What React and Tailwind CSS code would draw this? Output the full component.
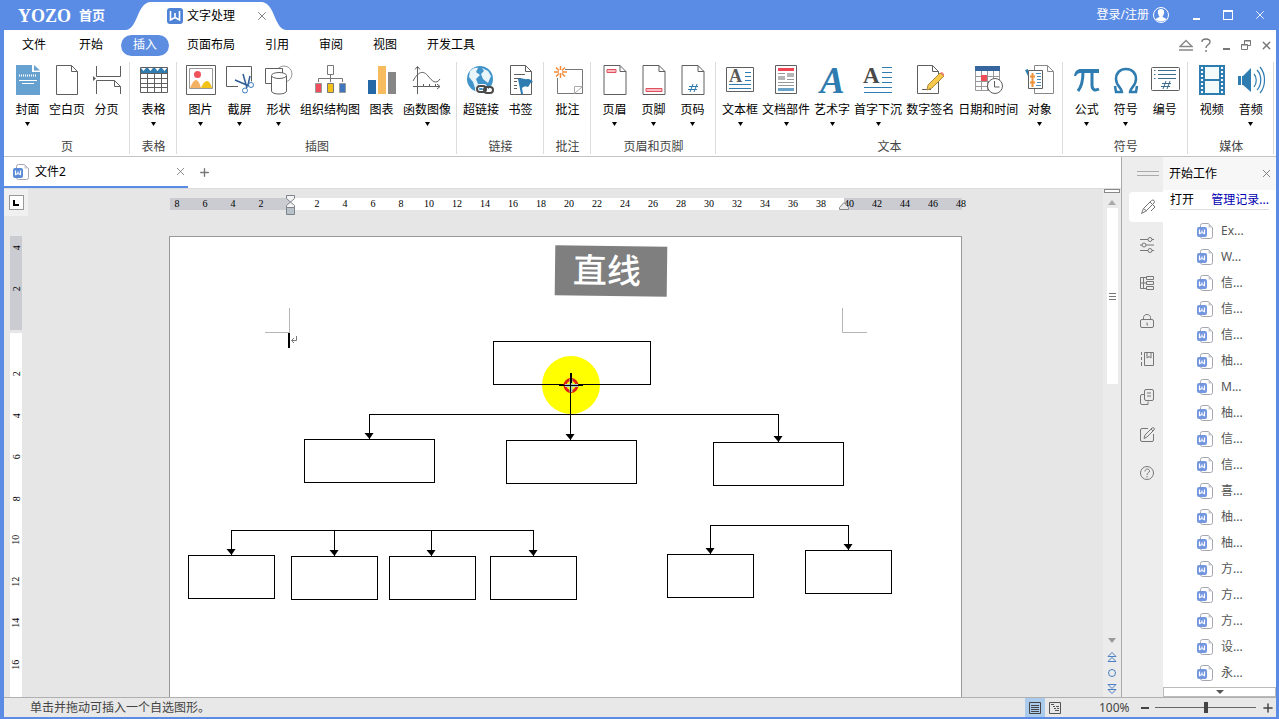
import React from "react";
import { X, Plus } from "lucide-react";

const BLUE = "#2f7cb0";
const DARK = "#5f5f5f";

const Icon = ({ children }) => (
  <svg width="30" height="30" viewBox="0 0 30 30" fill="none" stroke={DARK} className="overflow-visible">
    {children}
  </svg>
);

const Sheet = ({ children }) => (
  <Icon>
    <path d="M4 .5h16l6 6v23H4z" fill="#fff" />
    <path d="M20 .5v6h6" />
    {children}
  </Icon>
);

const icons = {
  cover: (
    <Icon>
      <path d="M3 0h16v7h8v23H3z" fill="#67a1d0" stroke="none" />
      <path d="M21 0v5.500h6z" fill="#67a1d0" stroke="none" />
      <path d="M6 10.500h17" stroke="#fff" strokeDasharray="1 1" strokeWidth="2" />
      <path d="M6 15.500h18M9 18.500h12" stroke="#fff" />
    </Icon>
  ),
  blank: (
    <Icon>
      <path d="M4.500.5h15l6 6v23h-21z" fill="#fff" />
      <path d="M19.500.5v6h6" />
    </Icon>
  ),
  pageBreak: (
    <Icon>
      <path d="M4.500 1v10.500h24V1M4.500 29V15.500h18l6 6V29M22.500 15.500v6h6" />
      <path d="M1 11v5l3-2.500z" fill={DARK} stroke="none" />
    </Icon>
  ),
  table: (
    <Icon>
      <path d="M1 3h28v5H1z" fill="#2f7cb0" stroke="none" />
      <path d="M2 3h5l-2.500 3zM9 3h5l-2.500 3zM16 3h5l-2.500 3zM23 3h5l-2.500 3z" fill="#fff" stroke="none" />
      <path d="M1.500 2.500h27v25h-27zM1.500 8.500h27M1.500 13.500h27M1.500 18.500h27M1.500 22.500h27M8.500 8v19M15.500 8v19M22.500 8v19" />
    </Icon>
  ),
  picture: (
    <Icon>
      <path d="M.5.5h29v29H.5z" fill="#fff" />
      <path d="M3.500 3.500h23v20h-23z" stroke="#999" />
      <circle cx="11.500" cy="9.500" r="3.500" fill="#f0525a" stroke="none" />
      <path d="M4 23c2-5 4-8 6-8s4 4 5 8z" fill="#f4b164" stroke="none" />
      <path d="M15 23c2-5 4-7 6-7s4 3 5 7z" fill="#f2c218" stroke="none" />
    </Icon>
  ),
  screenshot: (
    <Icon>
      <path d="M13 21.500H1.500v-20h25v15" />
      <path d="M18 9l4 14M25 11l-2 9M10 15l14 6" stroke="#2e5c96" strokeWidth="1.500" />
      <circle cx="20" cy="25.500" r="2.500" stroke="#3d7cc0" />
      <circle cx="26" cy="20" r="2.500" stroke="#3d7cc0" />
    </Icon>
  ),
  shapes: (
    <Icon>
      <circle cx="20" cy="9" r="8" stroke="#999" />
      <path d="M1.500 3.500h17v15h-17z" fill="#fff" />
      <path d="M7.500 11v15c0 4 15 4 15 0V11" fill="#fff" />
      <ellipse cx="15" cy="10.500" rx="7.500" ry="3" fill="#fff" />
    </Icon>
  ),
  org: (
    <Icon>
      <path d="M12.500.5h6v9h-6zM15.500 10v3.500M3.500 17v-3.500h24V17M15.500 13.500V17" stroke="#777" />
      <path d="M.5 18.500h6v9h-6z" fill="#f04e5c" stroke="#999" />
      <path d="M12.500 18.500h6v9h-6z" fill="#f2c218" stroke="#777" />
      <path d="M24.500 18.500h6v9h-6z" fill="#3e77bd" stroke="#999" />
    </Icon>
  ),
  chart: (
    <Icon>
      <path d="M1 15h8v14H1z" fill="#2468a8" stroke="none" />
      <path d="M11 1h8v28h-8z" fill="#f7bc5e" stroke="none" />
      <path d="M21 7h8v22h-8z" fill="#868686" stroke="none" />
    </Icon>
  ),
  func: (
    <Icon>
      <path d="M5.500 29V2M3 4.500l2.500-3 2.500 3M1 21.500h27M25 19l3 2.500-3 2.500M11.500 19v2M17.500 19v2M23.500 19v2" />
      <path d="M1 16C7 5 12 6 16 11s8 9 12 3" />
    </Icon>
  ),
  link: (
    <Icon>
      <circle cx="14" cy="14" r="13" fill="#4194c9" stroke="none" />
      <path d="M4 6c3-3 6-4 8-3l-2 4 4 3-4 4 2 5-3 4-2-6-4-5zM16 3l6 3 3 5-3 7-5-4-2-5 3-3zM14 22l6-3-1 6z" fill="#e9f5fb" stroke="none" />
      <rect x="11" y="21" width="9" height="6" rx="3" stroke="#fff" strokeWidth="4" />
      <rect x="11" y="21" width="9" height="6" rx="3" stroke="#4a4a4a" strokeWidth="2" />
      <rect x="18" y="22" width="9" height="6" rx="3" stroke="#4a4a4a" strokeWidth="2" />
    </Icon>
  ),
  bookmark: (
    <Icon>
      <path d="M4.500.5h15l6 6v23h-21z" fill="#fff" />
      <path d="M19.500.5v6h6M8 9.500h11M8 13.500h7M8 16.500h3M8 20.500h3M8 23.500h3" />
      <path d="M12 14c4-2 7 1 9 0 2 0 4 0 6 3-3 0-3 3-5 5-3-1-5 0-6 1l1 6h-2z" fill={BLUE} stroke="none" />
    </Icon>
  ),
  comment: (
    <Icon>
      <path d="M12 4.500h17.500v24h-25V13" stroke="#777" />
      <path d="M21.500 28.500v-7h8z" fill="#fff" stroke="#aaa" />
      <path d="M7.500 1v4M7.500 8v5M1 7h5M9 7h5M3 2.500l3 3M12 2.500l-3 3M3 11.500l3-3M12 11.500l-3-3" stroke="#f58a38" strokeWidth="1.500" />
    </Icon>
  ),
  header: (
    <Sheet>
      <path d="M7 4.500h9v3H7z" fill="#f9bcc0" stroke="#e0505e" />
    </Sheet>
  ),
  footer: (
    <Sheet>
      <path d="M7 23.500h16v3H7z" fill="#f9bcc0" stroke="#e0505e" />
    </Sheet>
  ),
  pageNo: (
    <Sheet>
      <path d="M11 21.500h9M10 24.500h9M15 19l-3 8M19 19l-3 8" stroke={BLUE} />
    </Sheet>
  ),
  textBox: (
    <Icon>
      <path d="M1.500 2.500h27v24h-27z" fill="#fff" />
      <text x="4" y="17" fontSize="18" fontWeight="bold" fill="#5a5a5a" stroke="none" fontFamily="Liberation Serif, serif">A</text>
      <path d="M20 7.500h6M20 11.500h6M20 15.500h6M4 19.500h22M4 23.500h22" stroke={BLUE} />
    </Icon>
  ),
  parts: (
    <Icon>
      <path d="M4.500.5h21v28h-21z" fill="#fff" />
      <path d="M7 3h16v3H7z" fill="#ef4452" stroke="none" />
      <path d="M7 11h7v4H7zM16 8h7v4h-7z" fill="#b5b5b5" stroke="none" />
      <path d="M7 8.500h7M16 14.500h7M7 17.500h16M7 20.500h16" stroke="#999" />
      <path d="M7 23h16v3H7z" fill="#6ba3c8" stroke="none" />
    </Icon>
  ),
  wordArt: (
    <Icon>
      <text x="3" y="28" fontSize="37" fontWeight="bold" fontStyle="italic" fill={BLUE} stroke="none" fontFamily="Liberation Serif, serif">A</text>
    </Icon>
  ),
  dropCap: (
    <Icon>
      <text x="0" y="18" fontSize="23" fontWeight="bold" fill="#4a4a4a" stroke="none" fontFamily="Liberation Serif, serif">A</text>
      <path d="M19 2.500h10M19 7.500h10M19 12.500h10M19 17.500h10M1 22.500h28M1 27.500h28" stroke={BLUE} />
    </Icon>
  ),
  sign: (
    <Icon>
      <path d="M2.500.5h15l6 6v22h-21z" fill="#fff" />
      <path d="M17.500.5v6h6M7 24.500h9" />
      <path d="M13 20l12-12 4 3-12 12-5 2z" fill="#f7c94a" stroke="#b08a3c" />
      <path d="M25 8l2-1 2 2v2z" fill="#ef7d6c" stroke="none" />
    </Icon>
  ),
  date: (
    <Icon>
      <path d="M2 1h25v5H2z" fill="#35669e" stroke="none" />
      <path d="M2.500 6v19.500h24V6M2.500 11.500h24M2.500 16.500h24M2.500 21.500h24M8.500 6v19M14.500 6v19M20.500 6v19" stroke="#999" />
      <path d="M8 10h6v6H8z" fill="#ef4e58" stroke="none" />
      <circle cx="22" cy="21" r="7.500" fill="#fff" />
      <path d="M21.500 16v6h5" />
    </Icon>
  ),
  object: (
    <Icon>
      <path d="M9.500.5h13l6 6v22h-19z" fill="#fff" stroke="#888" />
      <path d="M22.500.5v6h6" stroke="#888" />
      <path d="M3.500 5.500h14v18h-14z" fill="#fff" />
      <path d="M0 5l3-1v7z" fill={BLUE} stroke="none" />
      <path d="M7.500 8v14M5 11.500h5M5 17.500h5" stroke="#f0923b" strokeWidth="2" />
      <path d="M11 8.500h5M12 11.500h4M12 14.500h4M12 17.500h4M11 20.500h5" stroke="#4b8ec0" />
    </Icon>
  ),
  pi: (
    <Icon>
      <path d="M2 11c1-5 3-7 7-7h18v4H9c-3 0-4 1-5 3z" fill={BLUE} stroke="none" />
      <path d="M11 7c0 9-1 14-5 19M20 7v13c0 5 3 6 7 4" stroke={BLUE} strokeWidth="3" />
    </Icon>
  ),
  omega: (
    <Icon>
      <path d="M4 21l1 6h6c0-4-6-6-6-13C5 8 9 4 15 4s10 4 10 10c0 7-6 9-6 13h6l1-6" stroke={BLUE} strokeWidth="2.500" />
    </Icon>
  ),
  numbering: (
    <Icon>
      <rect x="1.500" y="2.500" width="28" height="23" rx="1" fill="#fff" />
      <path d="M8 5.500h18M8 9.500h18M8 13.500h18M4 5.500h1.500M4 9.500h1.500M4 13.500h1.500" stroke="#3d6d8c" />
      <path d="M12 18.500h9M11 21.500h9M16 16l-3 8M20 16l-3 8" stroke="#3d6d8c" />
    </Icon>
  ),
  video: (
    <Icon>
      <path d="M2 0h26v30H2z" fill={BLUE} stroke="none" />
      <path d="M8 2h14v12H8zM8 16h14v12H8z" fill="#f3fafc" stroke="none" />
      <path d="M5 2v27M25 2v27" stroke="#fff" strokeWidth="2" strokeDasharray="2 2" />
    </Icon>
  ),
  audio: (
    <Icon>
      <path d="M2 11h3v9H2zM6 11h1l8-8v24l-8-7H6z" fill={BLUE} stroke="none" />
      <path d="M18 9c3 3 3 9 0 13M21 5c5 5 5 15 0 20M24 2c6 7 6 19 0 26" stroke={BLUE} strokeWidth="1.200" />
    </Icon>
  ),
};

const groups = [
  { name: "页", items: [["cover", "封面", true], ["blank", "空白页"], ["pageBreak", "分页"]] },
  { name: "表格", items: [["table", "表格", true]] },
  {
    name: "插图",
    items: [
      ["picture", "图片", true],
      ["screenshot", "截屏", true],
      ["shapes", "形状", true],
      ["org", "组织结构图"],
      ["chart", "图表"],
      ["func", "函数图像", true],
    ],
  },
  { name: "链接", items: [["link", "超链接"], ["bookmark", "书签"]] },
  { name: "批注", items: [["comment", "批注"]] },
  { name: "页眉和页脚", items: [["header", "页眉", true], ["footer", "页脚", true], ["pageNo", "页码", true]] },
  {
    name: "文本",
    items: [
      ["textBox", "文本框", true],
      ["parts", "文档部件", true],
      ["wordArt", "艺术字", true],
      ["dropCap", "首字下沉", true],
      ["sign", "数字签名"],
      ["date", "日期和时间"],
      ["object", "对象", true],
    ],
  },
  { name: "符号", items: [["pi", "公式", true], ["omega", "符号", true], ["numbering", "编号"]] },
  { name: "媒体", items: [["video", "视频"], ["audio", "音频", true]] },
];

const menus = ["开始", "插入", "页面布局", "引用", "审阅", "视图", "开发工具"];
const files = ["Ex...", "W...", "信...", "信...", "信...", "柚...", "M...", "柚...", "信...", "信...", "喜...", "柚...", "柚...", "方...", "方...", "方...", "设...", "永..."];
const hTicks = [8, 6, 4, 2, "", ...Array.from({ length: 24 }, (_, i) => (i + 1) * 2)];
const vTicks = [2, 4, 6, 8, 10, 12, 14, 16];

const boxes = [
  [493.5, 341.5, 157],
  [304.5, 439.5, 130],
  [506.5, 440.5, 130],
  [713.5, 442.5, 130],
  [188.5, 555.5, 86],
  [291.5, 556.5, 86],
  [389.5, 556.5, 86],
  [490.5, 556.5, 86],
  [667.5, 554.5, 86],
  [805.5, 550.5, 86],
];

const arrows = [
  [369.5, 414, 439],
  [570.5, 385, 440],
  [778.5, 414, 442],
  [231.5, 530, 555],
  [334.5, 530, 556],
  [431.5, 530, 556],
  [533.5, 530, 556],
  [710.5, 525, 554],
  [848.5, 525, 550],
];

const WordIcon = ({ color = "#7396e0" }) => (
  <svg width="16" height="16" viewBox="0 0 16 16" fill="none" className="shrink-0">
    <path d="M3.500 4V2.500q0-2 2-2h6l4 4v9q0 2-2 2h-8q-2 0-2-2" stroke="#a4a7b0" />
    <path d="M11.500.5v4h4z" fill="#c8cad0" />
    <rect x="0" y="4" width="10" height="10" rx="2" fill={color} />
    <path d="M2.500 6.500v4l2.500-1 2.500 1v-4M5 7.500v2" stroke="#fff" strokeWidth="1.200" />
  </svg>
);

const TitleBar = () => (
  <header className="flex h-[30px] shrink-0 text-white">
    <div className="flex w-[122px] items-center gap-2 pl-[14px] pt-0.5">
      <span className="font-['Liberation_Serif',serif] text-lg font-bold">YOZO</span>
      <a href="#home" className="text-[13px] font-bold">首页</a>
    </div>
    <div className="relative flex w-[160px] items-center pl-[41px] pt-0.5 text-black">
      <svg className="absolute inset-0" width="160" height="30" viewBox="0 0 160 30">
        <path d="M0 30C12 29 11 2 25 2h110c14 0 13 27 25 28z" fill="#fff" />
      </svg>
      <svg className="relative mr-1" width="16" height="16" viewBox="0 0 16 16">
        <rect width="16" height="16" rx="3" fill="#4f83d6" />
        <path d="M3.500 3v9l4.500-2.500 4.500 2.500V3M8 5v4.500" fill="none" stroke="#fff" strokeWidth="1.600" />
      </svg>
      <span className="relative">文字处理</span>
      <button aria-label="关闭" className="relative ml-[20px] text-[#777]"><X size={14} strokeWidth={1.5} /></button>
    </div>
    <div className="ml-auto flex items-center">
      <button className="mr-[11px] flex items-center gap-1">
        登录/注册
        <svg width="16" height="16" viewBox="0 0 16 16">
          <circle cx="8" cy="8" r="7.500" fill="none" stroke="#fff" />
          <path d="M8 2c5 0 3 6 1.500 7.500 0 1.500 3 1 4 3q-5.500 4-11 0c1-2 4-1.500 4-3C5 8 3 2 8 2z" fill="#fff" />
        </svg>
      </button>
      <button aria-label="最小化" className="flex w-8 justify-center pt-2"><span className="h-0.5 w-[7px] bg-white" /></button>
      <button aria-label="最大化" className="flex w-8 justify-center"><span className="h-[10px] w-[10px] border border-t-2 border-white" /></button>
      <button aria-label="关闭窗口" className="flex w-8 justify-center"><X size={14} strokeWidth={1.5} /></button>
    </div>
  </header>
);

const MenuBar = () => (
  <nav className="flex h-[30px] shrink-0 items-center bg-white">
    <button className="mr-[9px] px-3 pl-[18px]">文件</button>
    <div className="flex gap-1.5">
      {menus.map((m) => (
        <button key={m} className={m === "插入" ? "h-[21px] rounded-full bg-[#5c8de0] px-3 text-white" : "h-[21px] px-3"}>
          {m}
        </button>
      ))}
    </div>
    <div className="ml-auto flex text-[#777]">
      <button aria-label="收起功能区" className="flex w-5 justify-center">
        <svg width="14" height="14" viewBox="0 0 14 14" fill="none" stroke="#888">
          <path d="M1 8.500l6-6 6 6zM0 12h14" strokeWidth="1.400" />
        </svg>
      </button>
      <button aria-label="帮助" className="flex w-5 justify-center">
        <svg width="10" height="14" viewBox="0 0 10 14" fill="none" stroke="#777" strokeWidth="1.400">
          <path d="M1 4c0-4 8-4 8 0 0 3-4 2.500-4 6M5 12v2" />
        </svg>
      </button>
      <button aria-label="最小化文档" className="flex w-5 items-end justify-center pb-0.5"><span className="h-0.5 w-[7px] bg-[#777]" /></button>
      <button aria-label="还原文档" className="flex w-5 items-center justify-center">
        <svg width="10" height="12" viewBox="0 0 10 12" fill="none" stroke="#777">
          <path d="M3.500 5V1.500h6v5H7M.5 5.500h6v5h-6zM3 2h7M0 6h7" />
        </svg>
      </button>
      <button aria-label="关闭文档" className="flex w-5 items-center justify-center"><X size={13} strokeWidth={2.5} /></button>
    </div>
  </nav>
);

const Ribbon = () => (
  <section className="flex h-[97px] shrink-0 border-b border-[#c4c4c4] bg-white pb-0.5 pt-0.5">
    {groups.map((g) => (
      <div key={g.name} className="flex shrink-0 flex-col justify-between border-r border-[#dcdcdc] pl-1 pr-[3px] pt-[3px]">
        <div className="flex">
          {g.items.map(([icon, label, drop]) => (
            <button key={label} className="flex min-w-[39px] flex-col items-center whitespace-nowrap px-0.5">
              {icons[icon]}
              <span className="mt-1.5 leading-[18px]">{label}</span>
              {drop && (
                <svg width="7" height="4" viewBox="0 0 7 4" className="mt-[3px]"><path d="M1 0h5L3.500 4z" /></svg>
              )}
            </button>
          ))}
        </div>
        <div className="text-center leading-[14px] text-[#444]">{g.name}</div>
      </div>
    ))}
  </section>
);

const Diagram = () => (
  <svg width="791" height="460" viewBox="170 237 791 460" fill="none" stroke="#000" className="block">
    <path d="M265 332.500h24.500V308M842.500 308v24.500H867" stroke="#b5b5b5" />
    <path d="M289 333v15" strokeWidth="2" />
    <path d="M296.500 336v4.500H292M294 338l-2.500 2.500 2.500 2.500" stroke="#777" />
    <circle cx="571" cy="385" r="29" fill="#ff0" stroke="none" />
    {boxes.map(([x, y, w]) => (
      <rect key={x} x={x} y={y} width={w} height="43" />
    ))}
    <path d="M369 414.500h410M231 530.500h303M710 525.500h139" />
    {arrows.map(([x, from, to]) => (
      <g key={x}>
        <path d={`M${x} ${from}V${to}`} />
        <path d={`M${x - 5} ${to - 6}h9L${x} ${to}z`} fill="#000" stroke="none" />
      </g>
    ))}
    <circle cx="571" cy="385.500" r="6" stroke="#e02010" strokeWidth="3" />
    <path d="M571 379v13M565 385.500h13" stroke="#a9c9c0" strokeWidth="3" />
    <path d="M571 373v10" strokeWidth="2" />
    <path d="M570.500 383v14M559 385.500h24" />
  </svg>
);

const Workspace = () => (
  <div className="flex min-h-0 flex-1 bg-[#e6e6e6]">
    <div className="flex w-6 shrink-0 flex-col">
      <div className="flex h-[27px] shrink-0 items-center justify-center bg-[#f0f0f0]">
        <button aria-label="制表符" className="flex h-[15px] w-[15px] items-center justify-center border border-[#999] bg-white">
          <svg width="6" height="6" viewBox="0 0 6 6"><path d="M1 0v5h5" fill="none" stroke="#000" strokeWidth="2" /></svg>
        </button>
      </div>
      <div className="mx-1.5 mt-5 w-3 shrink-0 bg-[#cbccd2] font-['Liberation_Serif',serif] text-[10px]">
        <div className="flex h-6 items-center justify-center"><span className="-rotate-90">4</span></div>
        <div className="flex h-[70px] items-start justify-center pt-[22px]"><span className="-rotate-90">2</span></div>
      </div>
      <div className="mx-1.5 mt-[3px] w-3 flex-1 bg-white pt-5 font-['Liberation_Serif',serif] text-[10px]">
        <div className="grid h-[332px] grid-rows-8">
          {vTicks.map((t) => (
            <div key={t} className="flex items-center justify-center"><span className="-rotate-90">{t}</span></div>
          ))}
        </div>
      </div>
    </div>

    <div className="flex min-w-0 flex-1 flex-col items-center overflow-hidden pt-[9px]">
      <div className="relative flex h-3 w-[805px] shrink-0 bg-[linear-gradient(90deg,transparent_7px,#cbccd2_7px,#cbccd2_127px,#fff_127px,#fff_681px,#cbccd2_681px,#cbccd2_799px,transparent_799px)] font-['Liberation_Serif',serif] text-[10px] leading-3">
        {hTicks.map((t, i) => (
          <span key={i} className="w-7 shrink-0 text-center">{t}</span>
        ))}
        <svg className="absolute -top-[3px] left-[122px]" width="11" height="21" viewBox="0 0 11 21" fill="#f4f4f4" stroke="#7d838a">
          <path d="M1.500.5h8v3l-8 7v2h8v-2l-8-7z" />
          <path d="M1.500 12.500h8v7h-8z" fill="#b9c2c9" />
        </svg>
        <svg className="absolute left-[676px] top-1" width="11" height="8" viewBox="0 0 11 8" fill="#e8e8e8" stroke="#888">
          <path d="M.5 5.500l4.500-5 4.500 5v2h-9z" />
        </svg>
      </div>
      <div className="relative mt-[26px] w-[793px] flex-1 border border-b-0 border-[#999] bg-white">
        <Diagram />
        <div className="absolute left-[385px] top-[9px] flex h-[50px] w-[112px] rotate-[0.7deg] items-center bg-[#7f7f7f] pl-[18px] text-[34px] font-medium text-white">
          直线
        </div>
      </div>
    </div>

    <div className="flex w-[18px] shrink-0 flex-col items-center bg-[#ebebeb]">
      <div className="h-1 w-4 border border-[#888] bg-white" />
      <svg width="8" height="5" viewBox="0 0 8 5" className="mb-[3px] mt-[7px]" fill="#aaa"><path d="M0 5h8L4 0z" /></svg>
      <div className="flex h-[176px] w-[11px] flex-col items-center justify-center gap-0.5 bg-white">
        <span className="h-px w-[7px] bg-[#777]" />
        <span className="h-px w-[7px] bg-[#777]" />
        <span className="h-px w-[7px] bg-[#777]" />
      </div>
      <svg width="8" height="5" viewBox="0 0 8 5" className="mt-auto" fill="#999"><path d="M0 0h8L4 5z" /></svg>
      <svg width="10" height="44" viewBox="0 0 10 44" className="mb-0.5 mt-2" fill="none" stroke="#4a7fc4">
        <path d="M1 5.500l4-4 4 4zM1 10.500l4-4 4 4z" />
        <circle cx="5" cy="22" r="3.500" />
        <path d="M1 33.500l4 4 4-4zM1 38.500l4 4 4-4z" />
      </svg>
    </div>
  </div>
);

const railIcons = [
  ["样式", <path d="M1.500 14.500l2-5 8-8q1.500-1 2.500 0t0 2.500l-8 8zM3.500 9.500l3 2.500M10 3l3 3M13 6l2 2-4 4" />],
  ["设置", <path d="M1 2.500h8M13 2.500h2M1 8h2M7 8h8M1 13.500h8M13 13.500h2M11 .5a2 2 0 100 4 2 2 0 000-4M5 6a2 2 0 100 4 2 2 0 000-4M11 11.500a2 2 0 100 4 2 2 0 000-4" />],
  ["导航", <path d="M7.500 1.500h7v3h-7zM7.500 6.500h7v3h-7zM7.500 11.500h7v3h-7zM1.500 2.500h6M1.500 2.500v11h6M1.500 8h6M4.500 2.500v11" />],
  ["保护", <path d="M3 6.500h10q1.500 0 1.500 1.500v5q0 1.500-1.500 1.500H3Q1.500 14.500 1.500 13V8Q1.500 6.500 3 6.500zM4.500 6.500V4.500c0-4 7-4 7 0v2M8 9.500V12h1" />],
  ["书签", <path d="M5.500 1.500h9v13h-9zM8 1.500V7l2-1.500L12 7V1.500M2.500 1v3M2.500 6v3M2.500 11v4" />],
  ["剪贴板", <path d="M7 .5h6q1.500 0 1.500 1.500v8q0 1.500-1.500 1.500H7Q5.500 11.500 5.500 10V2Q5.500.5 7 .5zM8 4h4M8 7h4M5.500 5.500H3Q1.500 5.500 1.500 7v7q0 1.500 1.500 1.500h6v-3" />],
  ["编辑", <path d="M9 1.500H3Q1.500 1.500 1.500 3v10q0 1.500 1.500 1.500h10q1.500 0 1.500-1.500V7M5 11.500l1-3.500 7-7q1-.5 2 0t0 2l-7 7zM12 2l2 2" />],
  ["帮助", <path d="M8 1.500a6.500 6.500 0 100 13 6.500 6.500 0 000-13M6 6.500c0-3.500 4.500-3 4.500-.5 0 2-2.500 1.500-2.500 4M8 11v1.500" />],
];

const SideRail = () => (
  <aside className="flex w-[41px] shrink-0 flex-col gap-2 bg-[#ededed] pl-[7px]">
    <div className="mb-2 ml-2 mt-[14px] h-[5px] w-[22px] border-y border-[#aaa]" />
    {railIcons.map(([name, path], i) => (
      <button
        key={name}
        aria-label={name}
        className={i === 0 ? "flex h-[30px] items-center rounded-l bg-white pl-[11px]" : "flex h-[30px] items-center pl-[10px]"}
      >
        <svg width="16" height="16" viewBox="0 0 16 16" fill="none" stroke="#777">{path}</svg>
      </button>
    ))}
  </aside>
);

const TaskPane = () => (
  <aside className="flex w-[113px] shrink-0 flex-col bg-white">
    <div className="flex h-[33px] shrink-0 items-center justify-between bg-[#f7f7f7] pl-1.5 pr-[3px]">
      <h2>开始工作</h2>
      <button aria-label="关闭任务窗格" className="text-[#666]"><X size={13} strokeWidth={1.5} /></button>
    </div>
    <div className="mx-[7px] mb-2 flex h-5 shrink-0 items-center justify-between whitespace-nowrap border-b border-[#ddd]">
      <a href="#open">打开</a>
      <a href="#manage" className="text-[#0000b0]">管理记录...</a>
    </div>
    <ul className="min-h-0 flex-1 overflow-hidden text-[#555]">
      {files.map((f, i) => (
        <li key={i}>
          <a href="#file" className="flex h-[26px] items-center gap-2 pl-[34px]"><WordIcon />{f}</a>
        </li>
      ))}
    </ul>
    <button aria-label="更多" className="flex h-[10px] shrink-0 items-center justify-center border border-[#bbb]">
      <svg width="8" height="4" viewBox="0 0 8 4" fill="#555"><path d="M0 0h8L4 4z" /></svg>
    </button>
  </aside>
);

const StatusBar = () => (
  <footer className="flex h-5 shrink-0 items-center border-t border-[#b0b0b0] bg-[#e8e8e8] pl-[26px] text-[#444]">
    <span>单击并拖动可插入一个自选图形。</span>
    <button aria-label="页面视图" className="ml-auto flex h-full w-5 items-center justify-center bg-[#abcbed]">
      <svg width="12" height="12" viewBox="0 0 12 12" fill="none" stroke="#444"><path d="M.5.5h11v11H.5zM2 3.500h8M2 5.500h8M2 7.500h8M2 9.500h8" /></svg>
    </button>
    <button aria-label="大纲视图" className="flex h-full w-5 items-center justify-center">
      <svg width="12" height="12" viewBox="0 0 12 12" fill="none" stroke="#555"><path d="M.5.5h11v11H.5zM2 2.500h3M4 4.500h2M7 4.500h3M5 6.500h2M8 6.500h2M6 8.500h4" /></svg>
    </button>
    <label htmlFor="zoom" className="ml-[34px] w-8">100%</label>
    <button aria-label="缩小" className="ml-1 flex h-full w-5 items-center justify-center"><span className="h-0.5 w-2 bg-[#444]" /></button>
    <input
      id="zoom"
      type="range"
      defaultValue="50"
      className="h-3 w-[101px] appearance-none bg-[linear-gradient(#666,#666)] bg-[length:100%_1px] bg-center bg-no-repeat [&::-webkit-slider-thumb]:h-[11px] [&::-webkit-slider-thumb]:w-1 [&::-webkit-slider-thumb]:appearance-none [&::-webkit-slider-thumb]:bg-[#444]"
    />
    <button aria-label="放大" className="flex h-full w-5 items-center justify-center pl-1"><Plus size={14} strokeWidth={2.5} /></button>
  </footer>
);

const App = () => {
  return (
    <div className="flex h-screen flex-col overflow-hidden bg-[#5b8ce5] pb-0.5 pl-1 pr-[3px] font-['Noto_Sans','Noto_Sans_CJK_SC',sans-serif] text-xs text-black">
      <TitleBar />
      <MenuBar />
      <Ribbon />
      <main className="flex min-h-0 flex-1 bg-white">
        <div className="flex min-w-0 flex-1 flex-col border-r border-[#aaa]">
          <div className="flex h-8 shrink-0 border-b border-[#ddd]">
            <div className="flex h-[31px] w-[184px] items-center border-b-2 border-[#5b8ce5] pl-[9px] pr-px">
              <WordIcon color="#5b8bd6" />
              <span className="ml-1.5">文件2</span>
              <button aria-label="关闭文件2" className="ml-auto text-[#777]"><X size={13} strokeWidth={1.5} /></button>
            </div>
            <button aria-label="新建" className="ml-[10px] text-[#777]"><Plus size={13} strokeWidth={2.5} /></button>
          </div>
          <Workspace />
        </div>
        <SideRail />
        <TaskPane />
      </main>
      <StatusBar />
    </div>
  );
};

export default App;
